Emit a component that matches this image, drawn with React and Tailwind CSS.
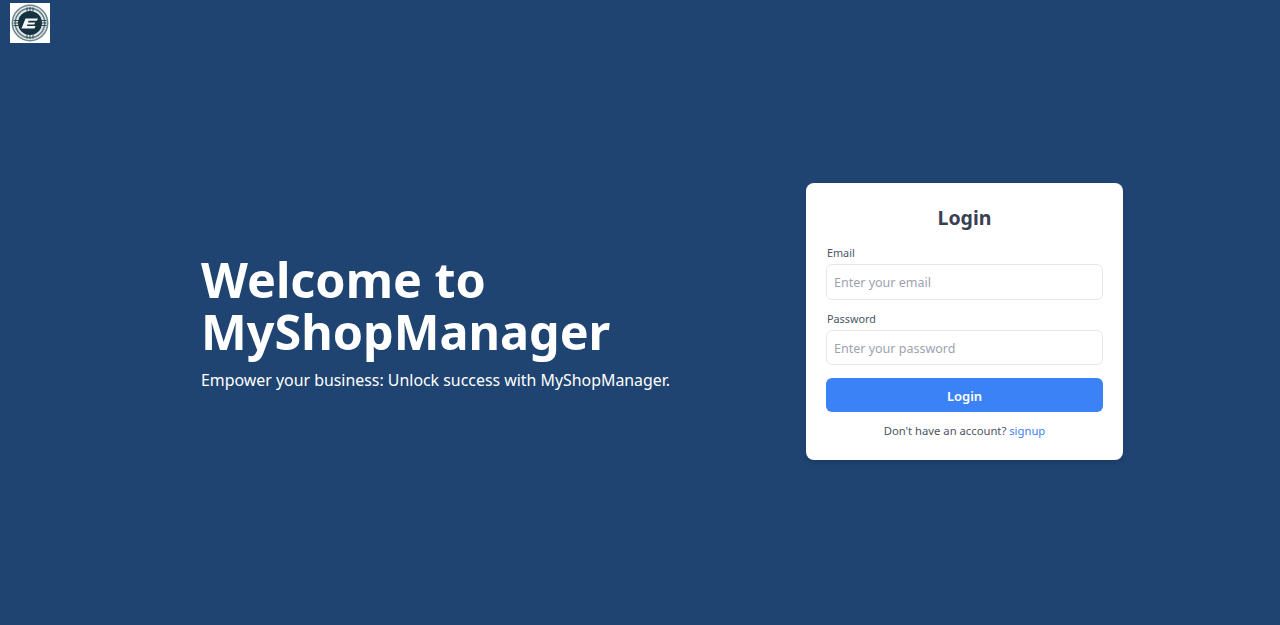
export default function App() {
  const font = "[font-family:'Noto_Sans',sans-serif]";
  return (
    <div className={`flex h-screen flex-col overflow-hidden bg-[#1f4472] ${font}`}>
      <div className="flex h-[43px] items-end pl-[10px]">
        <svg width="40" height="40" viewBox="0 0 40 40" aria-label="logo">
          <rect width="40" height="40" fill="#ffffff" />
          <circle cx="20" cy="20" r="18.500" fill="#6b858c" />
          <circle cx="20" cy="20" r="17" fill="#dfe6e7" />
          <circle cx="20" cy="20" r="15.500" fill="#5d7a84" />
          <circle cx="20" cy="20" r="14" fill="#e0e7e8" />
          <circle cx="20" cy="20" r="12" fill="#17323f" />
          <path d="M17 4.500v4M20 4v4.500M23 4.500v4M17 31.500v4M20 31.500v4.500M23 31.500v4M3.500 17.500h7M3.500 20h7M3.500 22.500h7M29.500 17.500h7M29.500 20h7M29.500 22.500h7" stroke="#23404c" strokeWidth="0.9" />
          <path d="M15.500 15.500h12.500l-1.100 2.200h-8.400l-.5 1.700h7.200l-.9 2h-7l-.4 1.700h8.700l-1.200 2.400H11.500z" fill="#f4f7f8" />
        </svg>
      </div>
      <main className="flex flex-1 items-center pb-[25px] pl-[201px]">
        <div className="w-[605px] pt-[3px] text-white">
          <h1 className="text-[48.5px] leading-[52px] font-bold">Welcome to<br />MyShopManager</h1>
          <p className="mt-[9px] text-[15.9px] leading-[28px]">Empower your business: Unlock success with MyShopManager.</p>
        </div>
        <form className="flex h-[277px] w-[317px] flex-col rounded-lg bg-white p-5 shadow-md">
          <h2 className="mt-[1px] mb-[13px] text-center text-[19.5px] leading-[28px] font-bold text-[#374151]">Login</h2>
          <label className="pl-[1px] text-[10.8px] leading-[16px] text-[#4b5563]">Email</label>
          <input placeholder="Enter your email" className="mt-[3px] h-[36px] w-full rounded-md border border-[#e5e7eb] px-[7px] text-[12.5px] outline-none placeholder:text-[#9ca3af]" />
          <label className="mt-[11px] pl-[1px] text-[10.8px] leading-[16px] text-[#4b5563]">Password</label>
          <input type="password" placeholder="Enter your password" className="mt-[3px] h-[35px] w-full rounded-md border border-[#e5e7eb] px-[7px] pt-[1px] text-[12.5px] outline-none placeholder:text-[#9ca3af]" />
          <button type="button" className="mt-[13px] h-[34px] w-full rounded-md bg-[#3b82f6] pt-[3px] text-[13px] font-semibold text-white">Login</button>
          <p className="mt-[11px] text-center text-[11.25px] leading-[16px] text-[#4b5563]">Don't have an account? <a className="text-[#3b82f6]">signup</a></p>
        </form>
      </main>
    </div>
  );
}
